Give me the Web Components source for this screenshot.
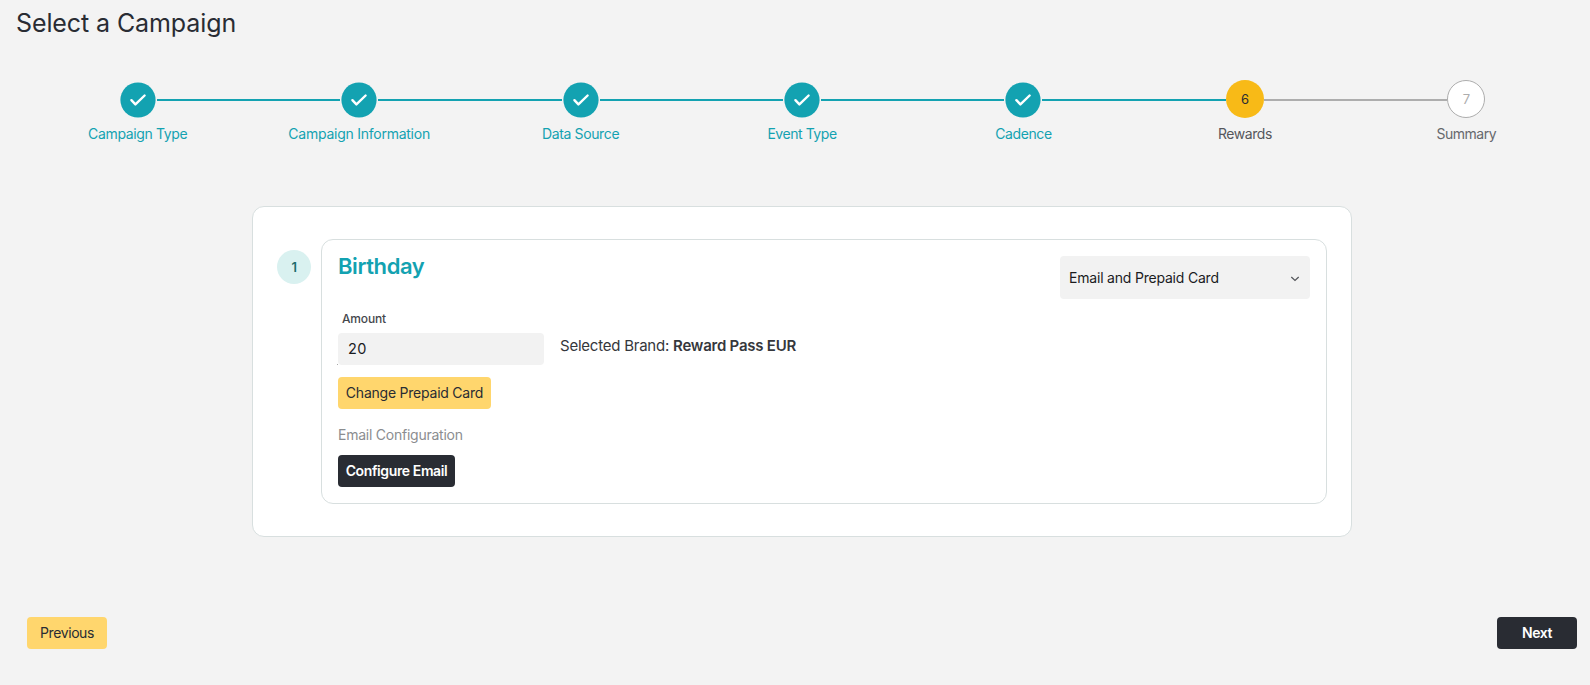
<!DOCTYPE html>
<html lang="en">
<head>
<meta charset="utf-8">
<title>Select a Campaign</title>
<style>
  html {
    --teal: #13a2b1;
    --yellow: #ffd66d;
    --amber: #f8ba17;
    --dark: #292c33;
    --border: #d8dfdf;
    --field: #f2f2f2;
  }
  body {
    margin: 0;
    background-color: #f3f3f3;
    color: var(--dark);
    font: 14px/20px Inter, "Liberation Sans", sans-serif;
    letter-spacing: -0.3px;
  }
</style>
</head>
<body>
<campaign-page>
  <span slot="title">Select a Campaign</span>
  <campaign-stepper slot="steps">
    <campaign-step state="done" style="letter-spacing: -0.36px">Campaign Type</campaign-step>
    <campaign-step state="done" style="letter-spacing: -0.25px">Campaign Information</campaign-step>
    <campaign-step state="done" style="letter-spacing: -0.36px">Data Source</campaign-step>
    <campaign-step state="done" style="letter-spacing: -0.45px">Event Type</campaign-step>
    <campaign-step state="done" style="letter-spacing: -0.4px">Cadence</campaign-step>
    <campaign-step state="active" number="6" style="letter-spacing: -0.44px">Rewards</campaign-step>
    <campaign-step state="todo" number="7" style="letter-spacing: -0.5px">Summary</campaign-step>
  </campaign-stepper>
  <reward-item number="1">
    <span slot="name">Birthday</span>
    <select-box slot="type">Email and Prepaid Card</select-box>
    <amount-field slot="amount" label="Amount">20</amount-field>
    <span slot="brand">Reward Pass EUR</span>
    <app-button slot="card" style="width: 153px; letter-spacing: -0.23px">Change Prepaid Card</app-button>
    <app-button slot="email" kind="dark" style="width: 117px; letter-spacing: -0.38px">Configure Email</app-button>
  </reward-item>
  <app-button slot="previous" style="width: 80px; letter-spacing: -0.4px">Previous</app-button>
  <app-button slot="next" kind="dark" style="width: 80px; letter-spacing: -0.43px">Next</app-button>
</campaign-page>

<script>
class BaseElement extends HTMLElement {
  constructor() {
    super()
    this.attachShadow({mode: 'open'})
    this.template = document.createElement('template')
  }

  connectedCallback() {
    this.template.innerHTML = this.render()
    this.shadowRoot.replaceChildren(this.template.content.cloneNode(true))
  }
}

class CampaignPage extends BaseElement {
  render() {
    return `
      <style>
        :host {
          display: flex;
          flex-direction: column;
          box-sizing: border-box;
          min-height: 685px;
        }
        h1 {
          margin: 0;
          padding: 7px 16px 0;
          font-size: 25px;
          line-height: 32px;
          font-weight: 400;
          letter-spacing: -0.1px;
        }
        main {
          padding: 41px 13px 36px 27px;
        }
        section {
          box-sizing: border-box;
          width: 1100px;
          margin: 62px auto 80px;
          padding: 32px 24px;
          border: 1px solid var(--border);
          border-radius: 12px;
          background-color: #fff;
        }
        footer {
          display: flex;
          justify-content: space-between;
        }
      </style>
      <h1><slot name="title"></slot></h1>
      <main>
        <slot name="steps"></slot>
        <section><slot></slot></section>
        <footer>
          <slot name="previous"></slot>
          <slot name="next"></slot>
        </footer>
      </main>
    `
  }
}

class CampaignStepper extends BaseElement {
  render() {
    return `
      <style>
        :host {
          display: grid;
          grid-template-columns: repeat(7, 1fr);
        }
      </style>
      <slot></slot>
    `
  }
}

class CampaignStep extends BaseElement {
  renderMarker() {
    if (this.getAttribute('state') === 'done') {
      return `
        <svg width="38" height="38" viewBox="0 0 38 38" fill="none">
          <circle cx="19" cy="20" r="17.6" fill="var(--teal)"/>
          <path d="M12.4 20.2L16.4 24.4L25.6 15.5" stroke="#fff" stroke-width="2.4" stroke-linecap="round" stroke-linejoin="round"/>
        </svg>
      `
    }
    return this.getAttribute('number')
  }

  render() {
    return `
      <style>
        :host {
          display: block;
          text-align: center;
          color: var(--teal);
          --before: var(--teal);
          --after: var(--teal);
        }
        :host([state="active"]) {
          color: #55575c;
          --after: #adadad;
        }
        :host([state="todo"]) {
          color: #66686c;
          --before: #adadad;
        }
        :host(:first-child) {
          --before: transparent;
        }
        :host(:last-child) {
          --after: transparent;
        }
        .track {
          display: grid;
          grid-template-columns: 1fr 38px 1fr;
          align-items: center;
          height: 38px;
          margin-bottom: 6px;
        }
        .rail {
          height: 2px;
          margin-top: 2px;
          background-color: var(--before);
        }
        .rail:last-child {
          background-color: var(--after);
        }
        .marker {
          box-sizing: border-box;
          width: 38px;
          height: 38px;
          border-radius: 50%;
          font-size: 13px;
          line-height: 39px;
        }
        :host([state="active"]) .marker {
          background-color: var(--amber);
          color: var(--dark);
        }
        :host([state="todo"]) .marker {
          border: 1px solid #adadad;
          background-color: #fff;
          color: #adadad;
          line-height: 37px;
        }
        svg {
          display: block;
        }
      </style>
      <div class="track">
        <div class="rail"></div>
        <div class="marker">${this.renderMarker()}</div>
        <div class="rail"></div>
      </div>
      <slot></slot>
    `
  }
}

class RewardItem extends BaseElement {
  render() {
    return `
      <style>
        :host {
          display: flex;
          align-items: flex-start;
          gap: 10px;
        }
        .badge {
          width: 34px;
          height: 34px;
          margin-top: 11px;
          border-radius: 50%;
          background-color: #d9f1f0;
          color: #1c6c6c;
          font-size: 13px;
          font-weight: 600;
          line-height: 34px;
          text-align: center;
        }
        article {
          flex: 1;
          display: flex;
          flex-direction: column;
          align-items: flex-start;
          padding: 16px;
          border: 1px solid var(--border);
          border-radius: 12px;
        }
        header {
          display: flex;
          align-self: stretch;
          align-items: flex-start;
          justify-content: space-between;
          margin-bottom: 12px;
        }
        h2 {
          margin: 0;
          color: var(--teal);
          font-size: 22px;
          line-height: 20px;
          font-weight: 600;
          letter-spacing: -0.4px;
        }
        .row {
          display: flex;
          align-items: flex-end;
          gap: 16px;
          margin-bottom: 12px;
        }
        .brand {
          margin: 0 0 9px;
          color: #35373c;
          font-size: 15px;
          letter-spacing: -0.23px;
        }
        b {
          font-weight: 600;
        }
        .caption {
          margin: 16px 0 10px;
          color: #8b8d90;
          letter-spacing: -0.24px;
        }
      </style>
      <div class="badge">${this.getAttribute('number')}</div>
      <article>
        <header>
          <h2><slot name="name"></slot></h2>
          <slot name="type"></slot>
        </header>
        <div class="row">
          <slot name="amount"></slot>
          <p class="brand">Selected Brand: <b><slot name="brand"></slot></b></p>
        </div>
        <slot name="card"></slot>
        <p class="caption">Email Configuration</p>
        <slot name="email"></slot>
      </article>
    `
  }
}

class SelectBox extends BaseElement {
  render() {
    return `
      <style>
        :host {
          display: flex;
          align-items: center;
          justify-content: space-between;
          box-sizing: border-box;
          width: 250px;
          height: 43px;
          padding: 0 10px 0 9px;
          border-radius: 4px;
          background-color: var(--field);
          color: #1b1c1f;
          letter-spacing: -0.2px;
        }
      </style>
      <span><slot></slot></span>
      <svg width="10" height="10" viewBox="0 0 10 10" fill="none">
        <path d="M1.3 4L5 7.4L8.7 4" stroke="#55575c" stroke-width="1.3"/>
      </svg>
    `
  }
}

class AmountField extends BaseElement {
  render() {
    return `
      <style>
        :host {
          display: block;
          width: 206px;
        }
        label {
          display: block;
          margin-bottom: 6px;
          padding-left: 4px;
          color: #44474d;
          font-size: 12px;
          line-height: 16px;
          font-weight: 500;
          letter-spacing: -0.17px;
        }
        .value {
          height: 32px;
          padding-left: 10px;
          border-radius: 4px;
          background-color: var(--field);
          color: #1b1c1f;
          font-size: 14.5px;
          line-height: 32px;
          letter-spacing: 0.5px;
          /* resize mark at the lower left corner */
          box-shadow: -1px 0 0 -0.5px transparent;
        }
        .value::after {
          content: "";
          display: block;
          width: 1px;
          height: 1px;
          margin: -1px 0 0 -11px;
          background-color: #a9a9a9;
        }
      </style>
      <label>${this.getAttribute('label')}</label>
      <div class="value"><slot></slot></div>
    `
  }
}

class AppButton extends BaseElement {
  render() {
    return `
      <style>
        :host {
          display: block;
        }
        button {
          display: block;
          width: 100%;
          height: 32px;
          padding: 0;
          border: 0;
          border-radius: 4px;
          background-color: var(--yellow);
          color: var(--dark);
          font: inherit;
          letter-spacing: inherit;
          white-space: nowrap;
        }
        :host([kind="dark"]) button {
          background-color: var(--dark);
          color: #fff;
          font-weight: 600;
        }
      </style>
      <button type="button"><slot></slot></button>
    `
  }
}

customElements.define('campaign-page', CampaignPage)
customElements.define('campaign-stepper', CampaignStepper)
customElements.define('campaign-step', CampaignStep)
customElements.define('reward-item', RewardItem)
customElements.define('select-box', SelectBox)
customElements.define('amount-field', AmountField)
customElements.define('app-button', AppButton)
</script>
</body>
</html>
